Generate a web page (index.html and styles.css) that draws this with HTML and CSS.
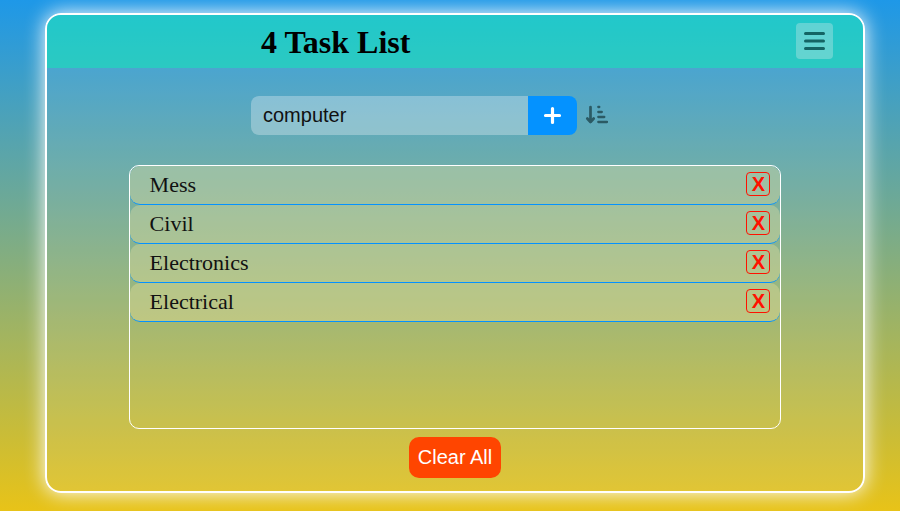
FILE: index.html
```html
<!DOCTYPE html>
<html lang="en">
<head>
<meta charset="utf-8">
<meta name="viewport" content="width=device-width, initial-scale=1">
<title>Task List</title>
<link rel="stylesheet" href="styles.css">
</head>
<body>
<main class="card">
  <header class="header">
    <h1 class="title">4 Task List</h1>
    <button class="menu" type="button" aria-label="Menu">
      <svg width="21" height="18" viewBox="0 0 21 18" fill="none" stroke="currentColor" stroke-width="3" stroke-linecap="round"><path d="M1.500 1.500h18M1.500 9h18M1.500 16.500h18"/></svg>
    </button>
  </header>
  <form class="form">
    <input class="field" type="text" value="computer" aria-label="New task">
    <button class="add" type="button" aria-label="Add task">
      <svg width="17" height="17" viewBox="0 0 17 17" fill="none" stroke="currentColor" stroke-width="3.200" stroke-linecap="round"><path d="M8.500 1.500v14M1.500 8.500h14"/></svg>
    </button>
    <button class="sort" type="button" aria-label="Sort tasks">
      <svg width="22" height="22" viewBox="0 0 22 22" fill="none" stroke="currentColor" stroke-width="2.300" stroke-linecap="round" stroke-linejoin="round"><path stroke-width="2.700" d="M4.500 2v15M1.300 13.500l3.200 3.600 3.200-3.600"/><path d="M12.300 2h1M12.300 7h3.500M12.300 12h6M12.300 17h8.700"/></svg>
    </button>
  </form>
  <ul class="list">
    <li class="item">Mess <button class="delete" type="button" aria-label="Delete Mess">X</button></li>
    <li class="item">Civil <button class="delete" type="button" aria-label="Delete Civil">X</button></li>
    <li class="item">Electronics <button class="delete" type="button" aria-label="Delete Electronics">X</button></li>
    <li class="item">Electrical <button class="delete" type="button" aria-label="Delete Electrical">X</button></li>
  </ul>
  <button class="clear" type="button">Clear All</button>
</main>
</body>
</html>
```
FILE: styles.css
```css
* {
  box-sizing: border-box;
  margin: 0;
  padding: 0;
}

body {
  min-height: 100vh;
  padding: 13px 35px 18px 45px;
  background: linear-gradient(#1e98e8, #e8c318);
  font-family: "Liberation Serif", "Times New Roman", serif;
}

button,
input {
  border: none;
  font-family: "Liberation Sans", Arial, sans-serif;
  font-size: 20px;
}

button {
  display: flex;
  align-items: center;
  justify-content: center;
  cursor: pointer;
}

svg {
  display: block;
  overflow: visible;
}

.card {
  display: flex;
  flex-direction: column;
  align-items: center;
  padding-bottom: 13px;
  overflow: hidden;
  border: 2px solid #fff;
  border-radius: 16px;
  background: rgba(238, 238, 238, 0.1);
  box-shadow: 0 0 20px #fff;
}

.header {
  display: flex;
  align-items: flex-start;
  justify-content: space-between;
  width: 100%;
  padding: 8px 30px 7px 214px;
  background: rgba(12, 238, 180, 0.5);
}

.title {
  font-size: 32px;
  line-height: 38px;
}

.menu {
  width: 37px;
  height: 36px;
  border-radius: 4px;
  background: rgba(238, 238, 238, 0.3);
  color: #146464;
}

.form {
  display: flex;
  align-items: center;
  margin: 28px 0 30px;
  padding-right: 51px;
}

.field {
  width: 277px;
  height: 39px;
  padding: 0 12px;
  border-radius: 8px 0 0 8px;
  background: rgba(232, 242, 245, 0.35);
  color: #111;
  outline: none;
}

.add {
  width: 49px;
  height: 39px;
  border-radius: 0 8px 8px 0;
  background: #0492ff;
  color: #fff;
}

.sort {
  margin-left: 9px;
  background: none;
  color: #2b5a64;
}

.list {
  width: 80%;
  height: 264px;
  overflow: auto;
  border: 1px solid #fff;
  border-radius: 10px;
  list-style: none;
}

.item {
  display: flex;
  align-items: flex-start;
  justify-content: space-between;
  height: 39px;
  padding: 6px 10px 6px 20px;
  border-bottom: 1px solid #0492ff;
  border-radius: 10px;
  background: rgba(244, 232, 160, 0.33);
  color: #111;
  font-size: 22px;
  line-height: 26px;
}

.delete {
  width: 24px;
  height: 24px;
  border: 1px solid #f10;
  border-radius: 4px;
  background: none;
  color: #f10;
  font-weight: bold;
}

.clear {
  margin-top: 8px;
  width: 92px;
  height: 41px;
  border-radius: 10px;
  background: #ff4500;
  color: #fff;
}
```
